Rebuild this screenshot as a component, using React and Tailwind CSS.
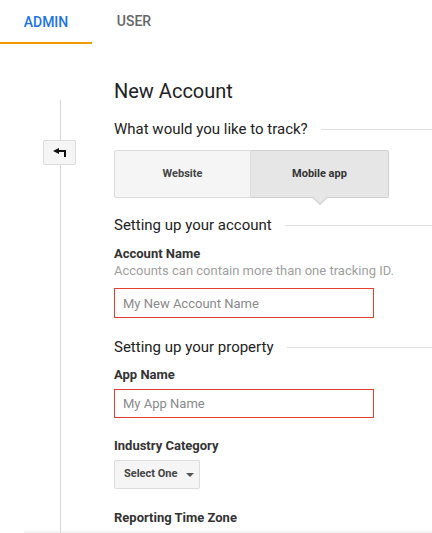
import React, { useState } from "react";

const SectionTitle = ({ children, className = "" }) => (
  <div className={`flex items-center h-[20px] ${className}`}>
    <span className="text-[15px] text-[#222] whitespace-nowrap">{children}</span>
    <div className="flex-1 h-px bg-[#e0e0e0] ml-[13px]"></div>
  </div>
);

const Label = ({ children, className = "" }) => (
  <div className={`h-[18px] flex items-center text-[13px] font-bold text-[#333] ${className}`}>
    {children}
  </div>
);

const BackIcon = () => (
  <svg width="14" height="9" viewBox="0 0 14 9">
    <polygon points="0,3 6,0 6,6" fill="#111" />
    <rect x="5" y="2" width="8" height="2" fill="#111" />
    <rect x="11" y="2" width="2" height="7" fill="#111" />
  </svg>
);

export default function App() {
  const [track, setTrack] = useState("mobile");

  return (
    <div className="w-[432px] h-[533px] overflow-hidden bg-white font-['Roboto',sans-serif]">
      {/* tabs */}
      <div className="flex h-[44px]">
        <div className="w-[92px] flex items-center justify-center border-b-2 border-[#f29900] text-[14px] font-medium text-[#1a73e8] pt-[2px]">
          ADMIN
        </div>
        <div className="w-[84px] flex items-center justify-center text-[14px] font-medium text-[#666] pb-[1px]">
          USER
        </div>
      </div>

      <div className="relative">
        {/* left rail */}
        <div className="absolute left-[60px] top-[56px] bottom-0 w-px bg-[#d6d6d6]"></div>
        <button className="absolute left-[43px] top-[96px] w-[33px] h-[25px] flex items-center justify-center bg-[#f5f5f5] border border-[#dcdcdc] rounded-[2px]">
          <BackIcon />
        </button>

        <div className="flex">
          <div className="w-[114px] shrink-0"></div>
          <div className="flex-1 flex flex-col">
            <div className="mt-[33px] h-[28px] flex items-center text-[20px] text-[#222]">New Account</div>

            <SectionTitle className="mt-[14px]">What would you like to track?</SectionTitle>

            <div className="mt-[11px] flex">
              <button
                onClick={() => setTrack("website")}
                className={`w-[137px] h-[48px] text-[11px] font-bold text-[#444] border rounded-l-[2px] ${
                  track === "website" ? "bg-[#e6e6e6] border-[#cfcfcf]" : "bg-[#f5f5f5] border-[#dcdcdc]"
                }`}
              >
                Website
              </button>
              <button
                onClick={() => setTrack("mobile")}
                className={`relative w-[138px] h-[48px] text-[11px] font-bold text-[#333] border border-l-0 rounded-r-[2px] ${
                  track === "mobile" ? "bg-[#e6e6e6] border-[#cfcfcf]" : "bg-[#f5f5f5] border-[#dcdcdc]"
                }`}
              >
                Mobile app
                {track === "mobile" && (
                  <span className="absolute left-1/2 -bottom-[6px] -ml-[5px] w-[10px] h-[10px] rotate-45 bg-[#e6e6e6] border-r border-b border-[#cfcfcf]"></span>
                )}
              </button>
            </div>

            <SectionTitle className="mt-[17px]">Setting up your account</SectionTitle>
            <Label className="mt-[10px]">Account Name</Label>
            <div className="h-[16px] flex items-center text-[13px] text-[#a0a0a0]">
              Accounts can contain more than one tracking ID.
            </div>
            <input
              placeholder="My New Account Name"
              className="mt-[9px] w-[260px] h-[30px] px-[8px] border border-[#e2402f] text-[13px] text-[#333] placeholder-[#8a8a8a] outline-none"
            />

            <SectionTitle className="mt-[19px]">Setting up your property</SectionTitle>
            <Label className="mt-[9px]">App Name</Label>
            <input
              placeholder="My App Name"
              className="mt-[5px] w-[260px] h-[29px] px-[8px] border border-[#e2402f] text-[13px] text-[#333] placeholder-[#8a8a8a] outline-none"
            />

            <Label className="mt-[19px]">Industry Category</Label>
            <button className="mt-[5px] w-[86px] h-[29px] flex items-center pl-[9px] bg-[#f5f5f5] border border-[#dcdcdc] rounded-[2px] text-[11px] font-bold text-[#444]">
              Select One
              <span className="ml-[9px] w-0 h-0 border-l-[4px] border-r-[4px] border-t-[4px] border-l-transparent border-r-transparent border-t-[#555]"></span>
            </button>

            <Label className="mt-[20px]">Reporting Time Zone</Label>
          </div>
        </div>
        <div className="ml-[24px] mt-[4px] h-[4px] bg-[#f3f3f3]"></div>
      </div>
    </div>
  );
}
